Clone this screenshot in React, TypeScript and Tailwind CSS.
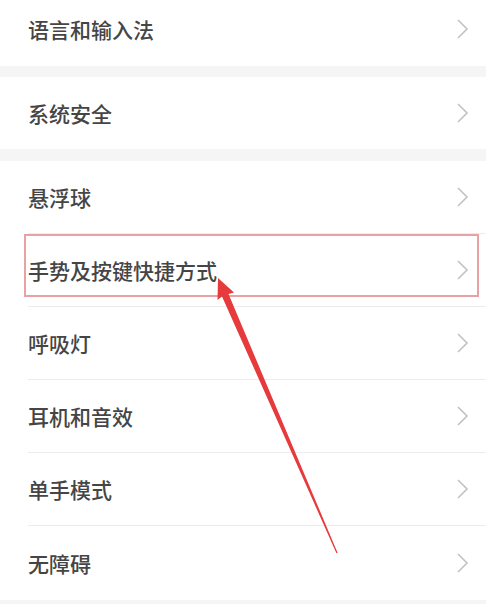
import React from "react";

const font = { fontFamily: '"Noto Sans CJK SC", "Noto Sans", sans-serif' };

function Chevron() {
  return (
    <svg width="14" height="22" viewBox="0 0 14 22" className="shrink-0">
      <polyline points="2,2 11,11 2,20" fill="none" stroke="#c2c2c2" strokeWidth="1.6" strokeLinejoin="miter" />
    </svg>
  );
}

function Row({ label, h, border = false, textOffset = "" }: { label: string; h: string; border?: boolean; textOffset?: string }) {
  return (
    <div className={`${h} bg-white pl-7 flex`}>
      <div className={`flex-1 flex items-center justify-between pr-[16px] ${border ? "border-b border-[#ececec]" : ""} ${textOffset}`}>
        <span className="text-[21px] leading-none font-medium text-[#454545]">{label}</span>
        <Chevron />
      </div>
    </div>
  );
}

export default function App() {
  return (
    <div className="relative w-[486px] h-[604px] overflow-hidden bg-[#f5f5f5]" style={font}>
      <Row label="语言和输入法" h="h-[66px]" textOffset="pb-[8px]" />
      <div className="h-[11px] bg-[#f5f5f5]" />
      <Row label="系统安全" h="h-[72px]" />
      <div className="h-[12px] bg-[#f5f5f5]" />
      <Row label="悬浮球" h="h-[73px]" border />
      <Row label="手势及按键快捷方式" h="h-[73px]" border />
      <Row label="呼吸灯" h="h-[73px]" border />
      <Row label="耳机和音效" h="h-[73px]" border />
      <Row label="单手模式" h="h-[73px]" border />
      <Row label="无障碍" h="h-[74px]" />
      <div className="h-[4px] bg-[#f5f5f5]" />

      <div className="absolute left-[24px] top-[234px] w-[455px] h-[63px] border-2 border-[#e9a2a4] pointer-events-none" />
      <svg className="absolute left-0 top-0 pointer-events-none" width="486" height="604" viewBox="0 0 486 604">
        <polygon
          points="218,278 234,292.5 228.5,294 337.55,552.76 336.45,553.24 222,296.5 217.5,300"
          fill="#e63a3c"
        />
      </svg>
    </div>
  );
}
